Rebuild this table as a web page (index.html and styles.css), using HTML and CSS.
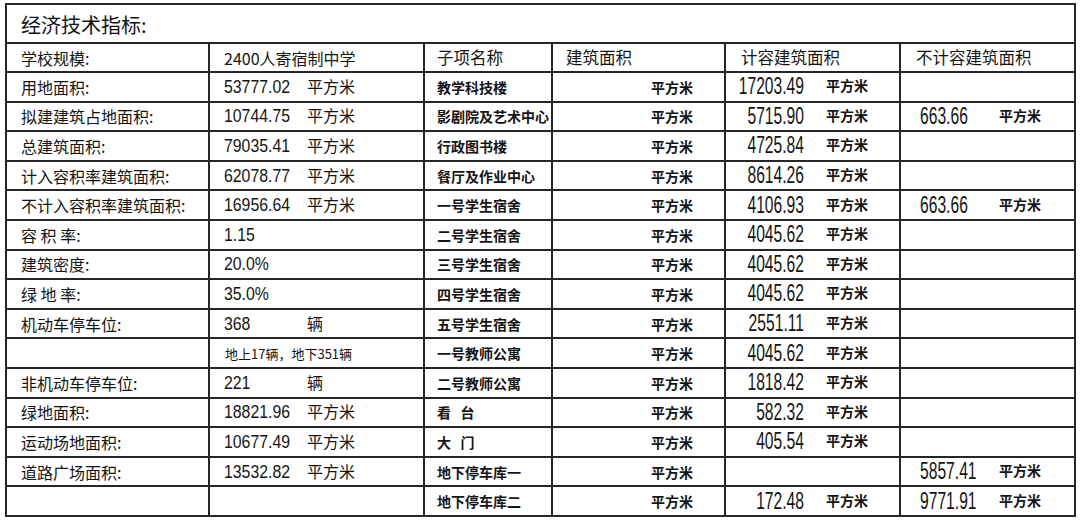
FILE: index.html
```html
<!DOCTYPE html>
<html lang="zh-CN">
<head>
<meta charset="utf-8">
<title>经济技术指标</title>
<link rel="stylesheet" href="styles.css">
</head>
<body>
<table class="sheet">
  <colgroup>
    <col class="w1"><col class="w2"><col class="w3"><col class="w4"><col class="w5"><col class="w6">
  </colgroup>
  <tr class="title-row"><td colspan="6" class="title">经济技术指标:</td></tr>
  <tr class="head-row">
    <td class="c1">学校规模:</td>
    <td class="c2">2400人寄宿制中学</td>
    <td class="c3 head">子项名称</td>
    <td class="c4 head">建筑面积</td>
    <td class="c5 head">计容建筑面积</td>
    <td class="c6 head">不计容建筑面积</td>
  </tr>
  <tr>
    <td class="c1">用地面积:</td>
    <td class="c2"><span class="num">53777.02</span><span class="unit">平方米</span></td>
    <td class="c3">教学科技楼</td>
    <td class="c4">平方米</td>
    <td class="c5"><span class="val">17203.49</span><span class="u2">平方米</span></td>
    <td class="c6"></td>
  </tr>
  <tr>
    <td class="c1">拟建建筑占地面积:</td>
    <td class="c2"><span class="num">10744.75</span><span class="unit">平方米</span></td>
    <td class="c3">影剧院及艺术中心</td>
    <td class="c4">平方米</td>
    <td class="c5"><span class="val">5715.90</span><span class="u2">平方米</span></td>
    <td class="c6"><span class="val6">663.66</span><span class="u2">平方米</span></td>
  </tr>
  <tr>
    <td class="c1">总建筑面积:</td>
    <td class="c2"><span class="num">79035.41</span><span class="unit">平方米</span></td>
    <td class="c3">行政图书楼</td>
    <td class="c4">平方米</td>
    <td class="c5"><span class="val">4725.84</span><span class="u2">平方米</span></td>
    <td class="c6"></td>
  </tr>
  <tr>
    <td class="c1">计入容积率建筑面积:</td>
    <td class="c2"><span class="num">62078.77</span><span class="unit">平方米</span></td>
    <td class="c3">餐厅及作业中心</td>
    <td class="c4">平方米</td>
    <td class="c5"><span class="val">8614.26</span><span class="u2">平方米</span></td>
    <td class="c6"></td>
  </tr>
  <tr>
    <td class="c1">不计入容积率建筑面积:</td>
    <td class="c2"><span class="num">16956.64</span><span class="unit">平方米</span></td>
    <td class="c3">一号学生宿舍</td>
    <td class="c4">平方米</td>
    <td class="c5"><span class="val">4106.93</span><span class="u2">平方米</span></td>
    <td class="c6"><span class="val6">663.66</span><span class="u2">平方米</span></td>
  </tr>
  <tr>
    <td class="c1">容 积 率:</td>
    <td class="c2"><span class="num">1.15</span></td>
    <td class="c3">二号学生宿舍</td>
    <td class="c4">平方米</td>
    <td class="c5"><span class="val">4045.62</span><span class="u2">平方米</span></td>
    <td class="c6"></td>
  </tr>
  <tr>
    <td class="c1">建筑密度:</td>
    <td class="c2"><span class="num">20.0%</span></td>
    <td class="c3">三号学生宿舍</td>
    <td class="c4">平方米</td>
    <td class="c5"><span class="val">4045.62</span><span class="u2">平方米</span></td>
    <td class="c6"></td>
  </tr>
  <tr>
    <td class="c1">绿 地 率:</td>
    <td class="c2"><span class="num">35.0%</span></td>
    <td class="c3">四号学生宿舍</td>
    <td class="c4">平方米</td>
    <td class="c5"><span class="val">4045.62</span><span class="u2">平方米</span></td>
    <td class="c6"></td>
  </tr>
  <tr>
    <td class="c1">机动车停车位:</td>
    <td class="c2"><span class="num">368</span><span class="unit">辆</span></td>
    <td class="c3">五号学生宿舍</td>
    <td class="c4">平方米</td>
    <td class="c5"><span class="val">2551.11</span><span class="u2">平方米</span></td>
    <td class="c6"></td>
  </tr>
  <tr>
    <td class="c1"></td>
    <td class="c2 small">地上17辆，地下351辆</td>
    <td class="c3">一号教师公寓</td>
    <td class="c4">平方米</td>
    <td class="c5"><span class="val">4045.62</span><span class="u2">平方米</span></td>
    <td class="c6"></td>
  </tr>
  <tr>
    <td class="c1">非机动车停车位:</td>
    <td class="c2"><span class="num">221</span><span class="unit">辆</span></td>
    <td class="c3">二号教师公寓</td>
    <td class="c4">平方米</td>
    <td class="c5"><span class="val">1818.42</span><span class="u2">平方米</span></td>
    <td class="c6"></td>
  </tr>
  <tr>
    <td class="c1">绿地面积:</td>
    <td class="c2"><span class="num">18821.96</span><span class="unit">平方米</span></td>
    <td class="c3">看&nbsp;&nbsp;&nbsp;台</td>
    <td class="c4">平方米</td>
    <td class="c5"><span class="val">582.32</span><span class="u2">平方米</span></td>
    <td class="c6"></td>
  </tr>
  <tr>
    <td class="c1">运动场地面积:</td>
    <td class="c2"><span class="num">10677.49</span><span class="unit">平方米</span></td>
    <td class="c3">大&nbsp;&nbsp;&nbsp;门</td>
    <td class="c4">平方米</td>
    <td class="c5"><span class="val">405.54</span><span class="u2">平方米</span></td>
    <td class="c6"></td>
  </tr>
  <tr>
    <td class="c1">道路广场面积:</td>
    <td class="c2"><span class="num">13532.82</span><span class="unit">平方米</span></td>
    <td class="c3">地下停车库一</td>
    <td class="c4">平方米</td>
    <td class="c5"></td>
    <td class="c6 low"><span class="val6">5857.41</span><span class="u2">平方米</span></td>
  </tr>
  <tr>
    <td class="c1"></td>
    <td class="c2"></td>
    <td class="c3">地下停车库二</td>
    <td class="c4">平方米</td>
    <td class="c5"><span class="val">172.48</span><span class="u2">平方米</span></td>
    <td class="c6"><span class="val6">9771.91</span><span class="u2">平方米</span></td>
  </tr>
</table>
</body>
</html>
```

FILE: styles.css
```css
html, body {
  margin: 0;
  padding: 0;
  background: #ffffff;
}

body {
  padding: 3px 0 0 5px;
  color: #141414;
  font-family: "Noto Sans CJK SC", sans-serif;
}

.sheet {
  border-collapse: collapse;
  table-layout: fixed;
  width: 1069px;
}

.w1 { width: 203px; }
.w2 { width: 215px; }
.w3 { width: 128px; }
.w4 { width: 173px; }
.w5 { width: 175px; }
.w6 { width: 175px; }

.sheet td {
  border: 2px solid #262626;
  padding: 0;
  height: 29.6px;
  box-sizing: border-box;
  white-space: nowrap;
  overflow: hidden;
  vertical-align: middle;
  line-height: 1;
}

.sheet .title-row td {
  height: 39px;
}

.sheet .head-row td {
  height: 29px;
}

.title {
  font-family: "Noto Sans CJK SC", sans-serif;
  font-size: 20px;
  padding-left: 14px !important;
  padding-top: 3px !important;
}

.c1 {
  padding-left: 14px !important;
  font-family: "Noto Sans CJK SC", sans-serif;
  font-size: 16px;
}

.c2 {
  padding-left: 14px !important;
  font-family: "Noto Sans CJK SC", sans-serif;
  font-size: 16px;
}

.c2 .num {
  display: inline-block;
  width: 83px;
  font-family: "Liberation Sans", sans-serif;
  font-size: 18px;
  transform: scaleX(0.88);
  transform-origin: left center;
}

.c2 .unit {
  font-family: "Noto Sans CJK SC", sans-serif;
  font-size: 16px;
}

.c2.small {
  font-size: 13px;
  padding-left: 15px !important;
}

.head {
  font-family: "Noto Sans CJK SC", sans-serif;
  font-size: 16.5px;
}

.c3 {
  padding-left: 12px !important;
  font-family: "Noto Sans CJK SC", sans-serif;
  font-size: 14px;
  font-weight: 700;
}

.c3.head {
  font-weight: 400;
  font-size: 16.5px;
}

.c4 {
  padding-left: 98px !important;
  font-family: "Noto Sans CJK SC", sans-serif;
  font-size: 14px;
  font-weight: 700;
}

.c4.head {
  padding-left: 13px !important;
  font-weight: 400;
  font-size: 16.5px;
}

.c5 {
  padding-left: 0 !important;
}

.c5.head {
  padding-left: 15px !important;
}

.c6 {
  padding-left: 19px !important;
}

.c6.head {
  padding-left: 15px !important;
}

.c6.low {
  vertical-align: bottom;
  padding-bottom: 2px !important;
}

.val, .val6 {
  display: inline-block;
  font-family: "Liberation Sans", sans-serif;
  font-size: 23px;
  transform: scaleX(0.68);
}

.val {
  width: 78px;
  direction: rtl;
  text-align: right;
  transform-origin: right center;
}

.val6 {
  width: 79px;
  text-align: left;
  transform-origin: left center;
}

.u2 {
  display: inline-block;
  font-family: "Noto Sans CJK SC", sans-serif;
  font-size: 14px;
  font-weight: 700;
  vertical-align: 3px;
}

.c5 .u2 {
  margin-left: 22px;
}
```
